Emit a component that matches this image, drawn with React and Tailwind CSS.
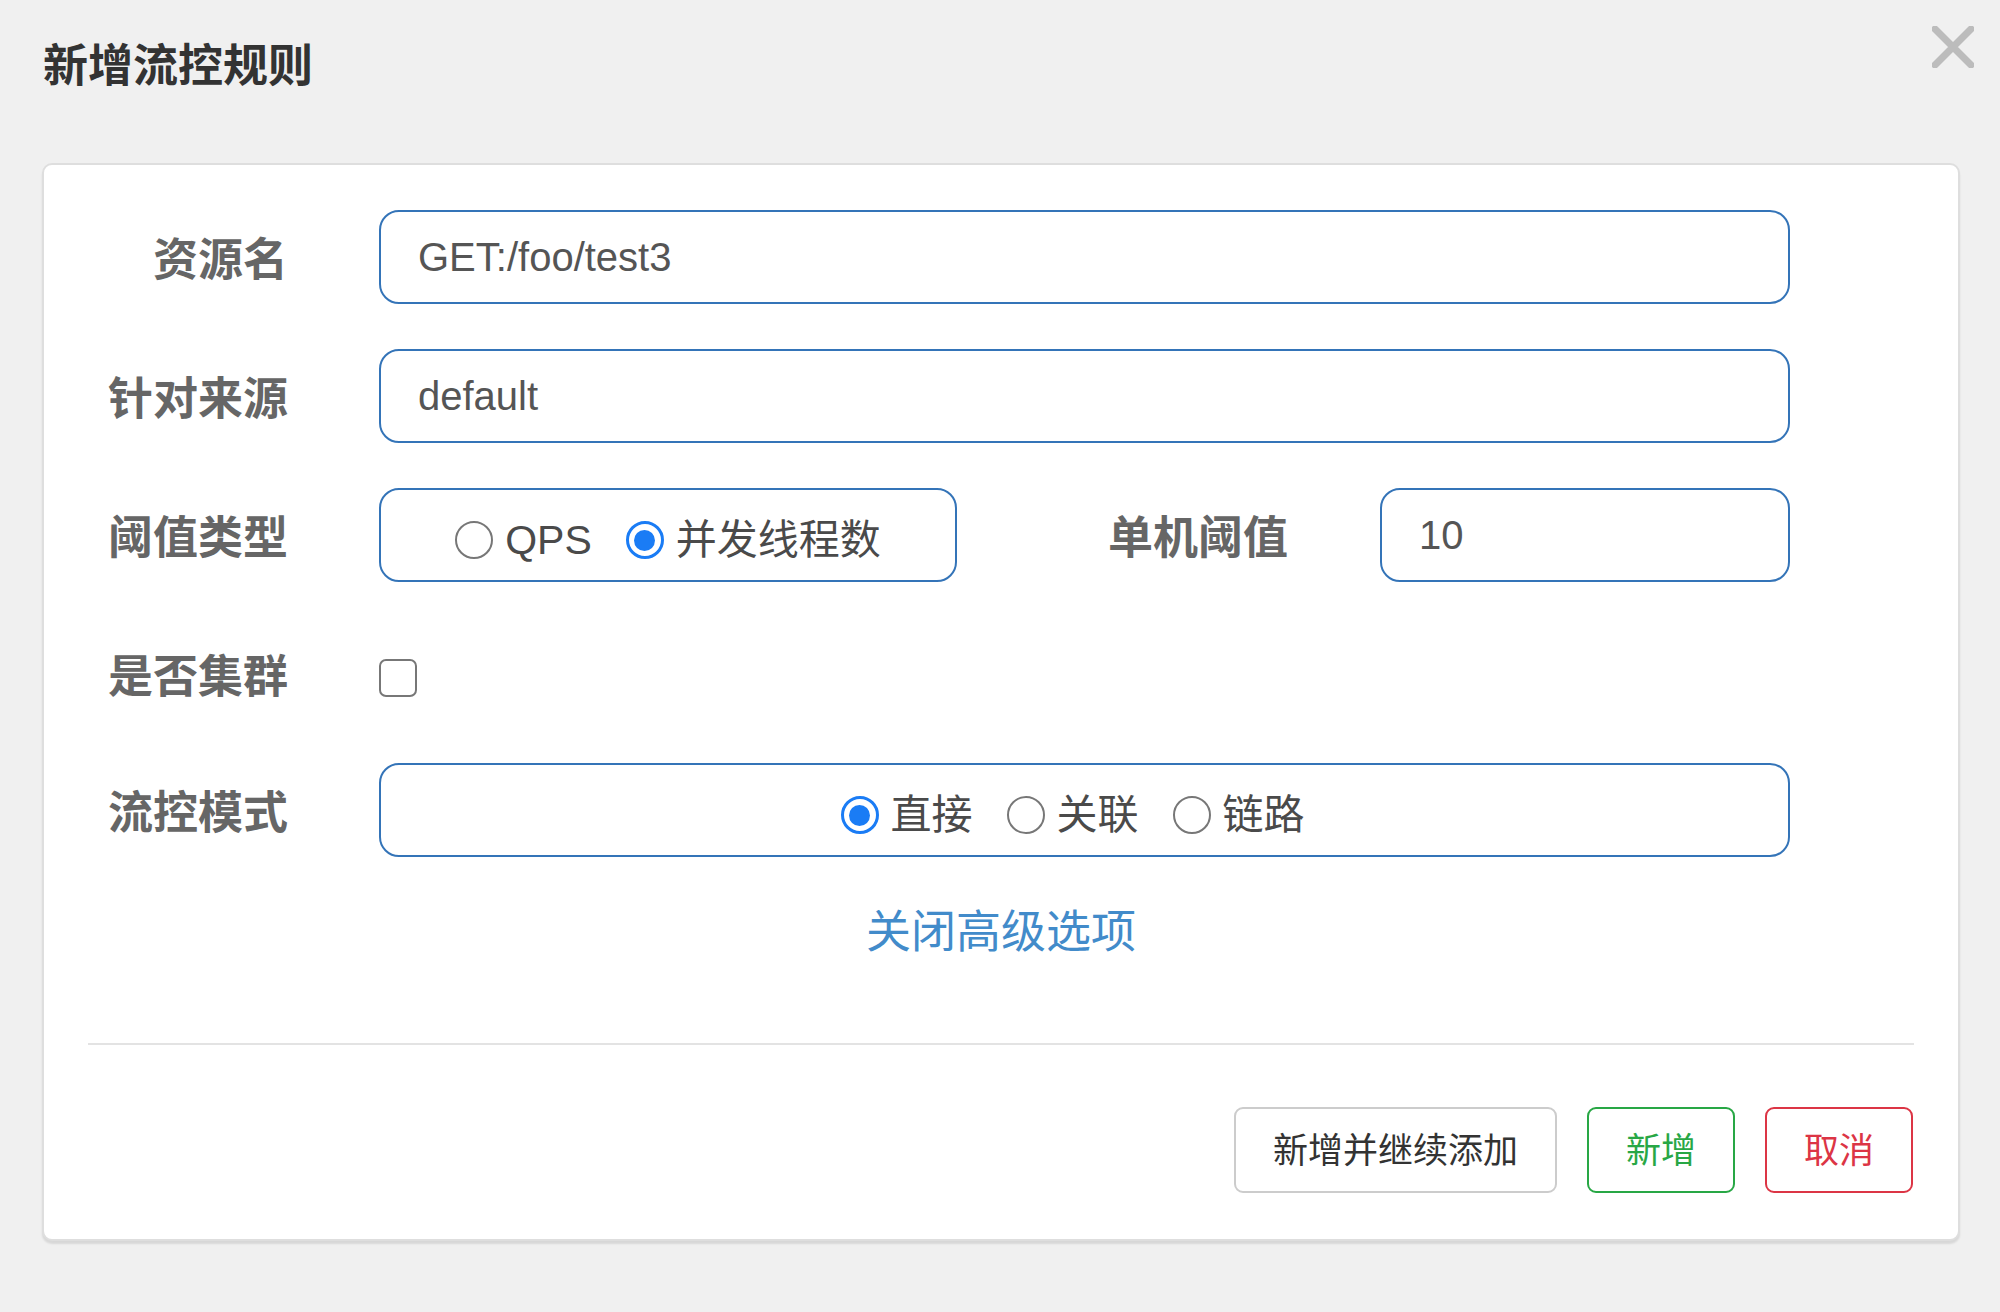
import React from 'react';

const font = "font-['Liberation_Sans','Noto_Sans_CJK_SC',sans-serif]";

const Radio = ({ checked, label }) => (
  <label className="flex items-center gap-[12px]">
    {checked ? (
      <span className="w-[38px] h-[38px] rounded-full border-[3px] border-[#1a7cf5] bg-white flex items-center justify-center">
        <span className="w-[21px] h-[21px] rounded-full bg-[#1a7cf5]" />
      </span>
    ) : (
      <span className="w-[38px] h-[38px] rounded-full border-2 border-[#777] bg-white" />
    )}
    <span className="text-[41px] leading-none text-[#4a4a4a]">{label}</span>
  </label>
);

const Label = ({ children, className = 'w-[244px]' }) => (
  <div className={`${className} shrink-0 text-right text-[45px] font-bold text-[#666] leading-none pt-[6px]`}>
    {children}
  </div>
);

const TextInput = ({ value, className = 'w-[1411px]' }) => (
  <input
    readOnly
    value={value}
    className={`${className} h-[94px] rounded-[20px] border-[2.5px] border-[#3474b8] bg-white pl-[37px] text-[40px] text-[#555] outline-none ${font}`}
  />
);

const Button = ({ children, className }) => (
  <button className={`h-[86px] px-[37px] rounded-[9px] border-2 bg-white text-[35px] leading-none ${className}`}>
    {children}
  </button>
);

export default function App() {
  return (
    <div className={`w-full h-[1312px] bg-[#f0f0f0] ${font}`}>
      {/* header */}
      <div className="flex items-start justify-between pl-[43px] pr-[26px] pt-[44px] h-[163px]">
        <h1 className="text-[45px] font-bold text-[#333] leading-none">新增流控规则</h1>
        <button className="-mt-[18px] w-[42px] h-[42px]">
          <svg viewBox="0 0 42 42" className="w-[42px] h-[42px]">
            <path d="M3 3 L39 39 M39 3 L3 39" stroke="#bcbcbc" strokeWidth="7" strokeLinecap="round" />
          </svg>
        </button>
      </div>

      {/* card */}
      <div className="ml-[42px] w-[1918px] bg-white border-2 border-[#dedede] rounded-[10px] shadow-[0_3px_2px_rgba(0,0,0,0.1)]">
        <div className="flex flex-col gap-[45px] pt-[45px]">
          <div className="flex items-center gap-[91px]">
            <Label>资源名</Label>
            <TextInput value="GET:/foo/test3" />
          </div>

          <div className="flex items-center gap-[91px]">
            <Label>针对来源</Label>
            <TextInput value="default" />
          </div>

          <div className="flex items-center">
            <Label>阈值类型</Label>
            <div className="ml-[91px] w-[578px] h-[94px] rounded-[20px] border-[2.5px] border-[#3474b8] flex items-center justify-center gap-[34px] pt-[10px]">
              <Radio label="QPS" />
              <Radio checked label="并发线程数" />
            </div>
            <Label className="w-[331px]">单机阈值</Label>
            <TextInput value="10" className="ml-[92px] w-[410px]" />
          </div>

          <div className="flex items-center gap-[91px] h-[94px]">
            <Label>是否集群</Label>
            <span className="mt-[8px] w-[38px] h-[38px] rounded-[7px] border-[2.5px] border-[#777] bg-white" />
          </div>

          <div className="flex items-center gap-[91px] -mt-[3px]">
            <Label>流控模式</Label>
            <div className="w-[1411px] h-[94px] rounded-[20px] border-[2.5px] border-[#3474b8] flex items-center justify-center gap-[34px] pt-[10px] pr-[24px]">
              <Radio checked label="直接" />
              <Radio label="关联" />
              <Radio label="链路" />
            </div>
          </div>
        </div>

        <div className="mt-[44px] flex justify-center">
          <a className="text-[45px] leading-[63px] text-[#428bca] cursor-pointer">关闭高级选项</a>
        </div>

        <div className="mt-[79px] mx-[44px] h-[2px] bg-[#e3e3e3]" />

        <div className="mt-[62px] mb-[46px] mr-[45px] flex justify-end gap-[30px]">
          <Button className="border-[#cccccc] text-[#333]">新增并继续添加</Button>
          <Button className="border-[#28a745] text-[#28a745]">新增</Button>
          <Button className="border-[#dc3545] text-[#dc3545]">取消</Button>
        </div>
      </div>
    </div>
  );
}
